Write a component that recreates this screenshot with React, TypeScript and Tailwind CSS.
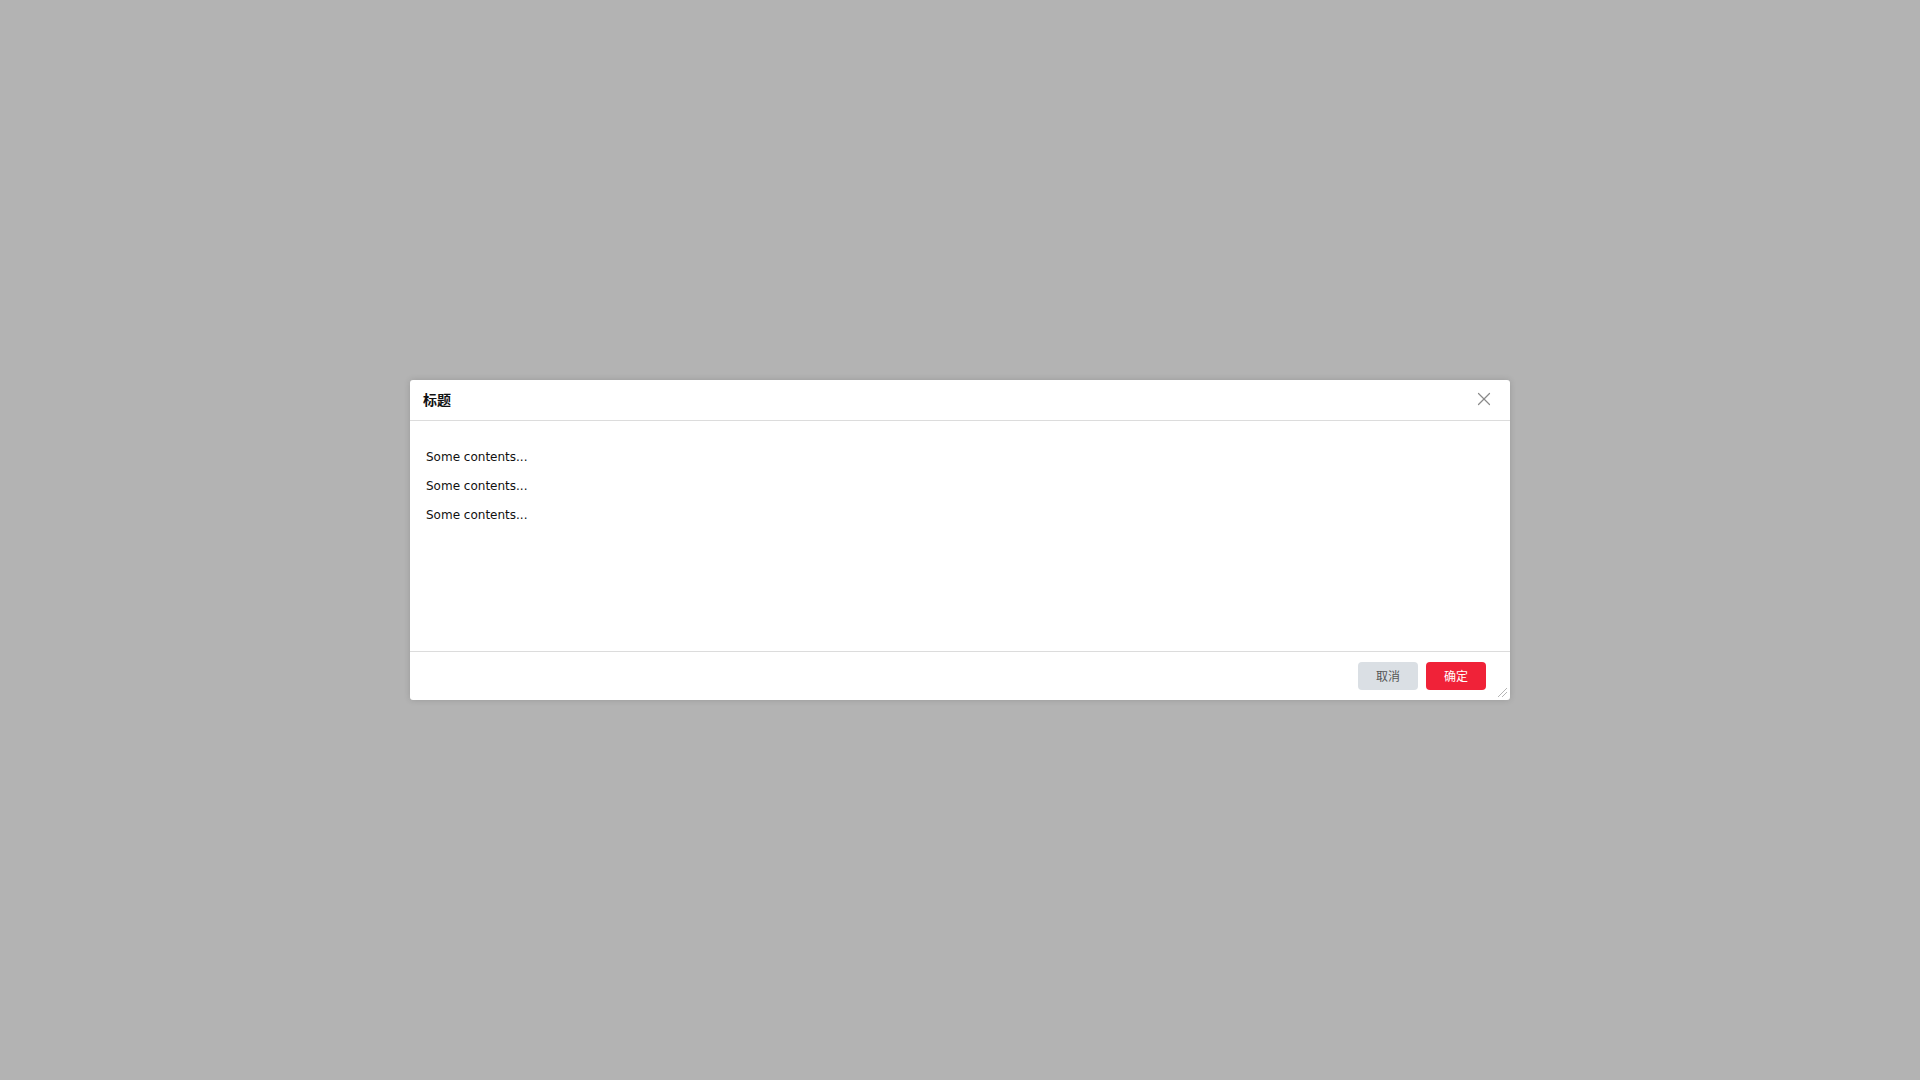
import { X } from "lucide-react";

const lines = ["Some contents...", "Some contents...", "Some contents..."];

export default function App() {
  return (
    <div
      className="w-full h-screen bg-[#b3b3b3] flex items-center justify-center"
      style={{ fontFamily: '"DejaVu Sans", "Noto Sans CJK SC", sans-serif' }}
    >
      {/* Dialog */}
      <div className="relative w-[1100px] h-[320px] bg-white rounded-[3px] shadow-[0_0_6px_rgba(0,0,0,0.15)] flex flex-col">
        {/* Header */}
        <div className="h-[41px] shrink-0 border-b border-[#dcdcdc] flex items-center justify-between pl-[13px] pr-[15px] pb-[2px]">
          <h2
            className="text-[14px] font-bold text-[#111]"
            style={{ fontFamily: '"Noto Sans CJK SC", "DejaVu Sans", sans-serif' }}
          >
            标题
          </h2>
          <button className="flex items-center justify-center text-[#8a8a8a]">
            <X className="w-[22px] h-[22px]" strokeWidth={1.3} />
          </button>
        </div>

        {/* Body */}
        <div className="flex-1 pt-[22px] px-[16px] text-[12px] leading-[29px] text-[#111]">
          {lines.map((line, i) => (
            <p key={i}>{line}</p>
          ))}
        </div>

        {/* Footer */}
        <div className="h-[49px] shrink-0 border-t border-[#dcdcdc] flex items-start justify-end gap-[8px] pt-[10px] pr-[24px]">
          <button
            className="w-[60px] h-[28px] rounded-[4px] bg-[#dadfe4] text-[12px] text-[#555]"
            style={{ fontFamily: '"Noto Sans CJK SC", sans-serif' }}
          >
            取消
          </button>
          <button
            className="w-[60px] h-[28px] rounded-[4px] bg-[#f02238] text-[12px] text-white"
            style={{ fontFamily: '"Noto Sans CJK SC", sans-serif' }}
          >
            确定
          </button>
        </div>

        {/* Resize grip */}
        <svg className="absolute right-[2px] bottom-[2px] w-[11px] h-[11px]" viewBox="0 0 11 11">
          <path d="M1 10 L10 1 M5 10 L10 5" stroke="#b5b5b5" strokeWidth="1" />
        </svg>
      </div>
    </div>
  );
}
